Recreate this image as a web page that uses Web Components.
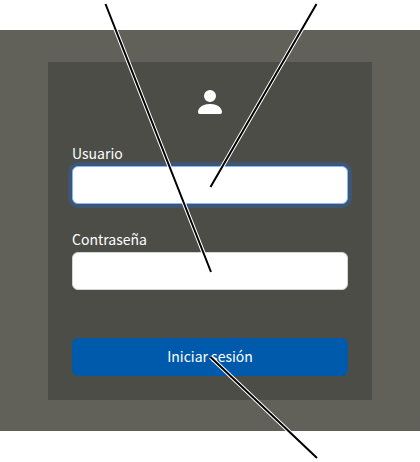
<!DOCTYPE html>
<html lang="es">
<head>
<meta charset="utf-8">
<meta name="viewport" content="width=device-width, initial-scale=1">
<title>Iniciar sesión</title>
<style>
body {
    margin: 0;
    padding: 30px 0;
    background: #fff;
    font-family: "Noto Sans CJK SC", "Open Sans", sans-serif;
    font-size: 14px;
    line-height: 22px;
}
</style>
</head>
<body>
<login-stage>
    <login-card>
        <user-icon slot="icon"></user-icon>
        <form-field type="text" name="usuario" active>Usuario</form-field>
        <form-field type="password" name="clave">Contraseña</form-field>
        <submit-button slot="action">Iniciar sesión</submit-button>
    </login-card>
    <callout-lines slot="overlay"></callout-lines>
</login-stage>

<script>
class BaseElement extends HTMLElement {
    constructor() {
        super();
        const template = document.createElement('template');
        template.innerHTML = this.constructor.localStyles
            + this.constructor.html;
        this.attachShadow({ mode: 'open' });
        this.shadowRoot.appendChild(template.content.cloneNode(true));
    }
}

class LoginStage extends BaseElement {
    static get localStyles() {
        return `
        <style>
        :host {
            display: block;
            position: relative;
            padding: 32px 48px 31px;
            background: #616159;
        }
        </style>
        `;
    }

    static get html() {
        return `
        <slot></slot>
        <slot name="overlay"></slot>
        `;
    }
}

class LoginCard extends BaseElement {
    static get localStyles() {
        return `
        <style>
        :host {
            display: block;
            background: #4c4d46;
            color: #fff;
        }
        form {
            display: flex;
            flex-direction: column;
            gap: 24px;
            padding: 24px;
        }
        .icon {
            display: flex;
            justify-content: center;
        }
        .action {
            padding-top: 24px;
        }
        </style>
        `;
    }

    static get html() {
        return `
        <form>
            <div class="icon"><slot name="icon"></slot></div>
            <slot></slot>
            <div class="action"><slot name="action"></slot></div>
        </form>
        `;
    }
}

class UserIcon extends BaseElement {
    static get localStyles() {
        return `
        <style>
        :host {
            display: block;
        }
        svg {
            display: block;
        }
        </style>
        `;
    }

    static get html() {
        return `
        <svg width="32" height="32" viewBox="0 0 16 16" fill="currentColor" aria-hidden="true">
            <path d="M3 14s-1 0-1-1 1-4 6-4 6 3 6 4-1 1-1 1H3zm5-6a3 3 0 1 0 0-6 3 3 0 0 0 0 6z"/>
        </svg>
        `;
    }
}

class FormField extends BaseElement {
    static get localStyles() {
        return `
        <style>
        :host {
            display: block;
        }
        label {
            display: block;
            padding-bottom: 2px;
        }
        input {
            display: block;
            box-sizing: border-box;
            width: 100%;
            height: 38px;
            padding: 6px 12px;
            border: 1px solid #ced4da;
            border-radius: 6px;
            background: #fff;
            color: #212529;
            font: inherit;
        }
        input:focus,
        :host([active]) input {
            border-color: #86b7fe;
            outline: 0;
            box-shadow: 0 0 0 4px #3e5676;
        }
        </style>
        `;
    }

    static get html() {
        return `
        <label for="control"><slot></slot></label>
        <input id="control">
        `;
    }

    connectedCallback() {
        const input = this.shadowRoot.querySelector('input');
        input.type = this.getAttribute('type') || 'text';
        input.name = this.getAttribute('name') || '';
    }
}

class SubmitButton extends BaseElement {
    static get localStyles() {
        return `
        <style>
        :host {
            display: block;
        }
        button {
            display: block;
            width: 100%;
            height: 38px;
            padding: 6px 12px 8px;
            border: 1px solid #005aab;
            border-radius: 6px;
            background: #005aab;
            color: #fff;
            font: inherit;
            cursor: pointer;
        }
        </style>
        `;
    }

    static get html() {
        return `
        <button type="button"><slot></slot></button>
        `;
    }
}

// pointers from the notes above and below the form to its controls
class CalloutLines extends BaseElement {
    static get localStyles() {
        return `
        <style>
        :host {
            position: absolute;
            top: -30px;
            left: 50%;
            transform: translateX(-50%);
            pointer-events: none;
        }
        svg {
            display: block;
        }
        .halo {
            stroke: #fff;
            stroke-width: 4;
        }
        .line {
            stroke: #000;
            stroke-width: 2;
        }
        </style>
        `;
    }

    static get html() {
        return `
        <svg width="420" height="461" viewBox="0 0 420 461" fill="none" aria-hidden="true">
            <path class="halo" d="M105.500 4L211 272M316.500 4L210.500 187M210.500 357L317 458"/>
            <path class="line" d="M105.500 4L211 272M316.500 4L210.500 187M210.500 357L317 458"/>
        </svg>
        `;
    }
}

customElements.define('login-stage', LoginStage);
customElements.define('login-card', LoginCard);
customElements.define('user-icon', UserIcon);
customElements.define('form-field', FormField);
customElements.define('submit-button', SubmitButton);
customElements.define('callout-lines', CalloutLines);
</script>
</body>
</html>
